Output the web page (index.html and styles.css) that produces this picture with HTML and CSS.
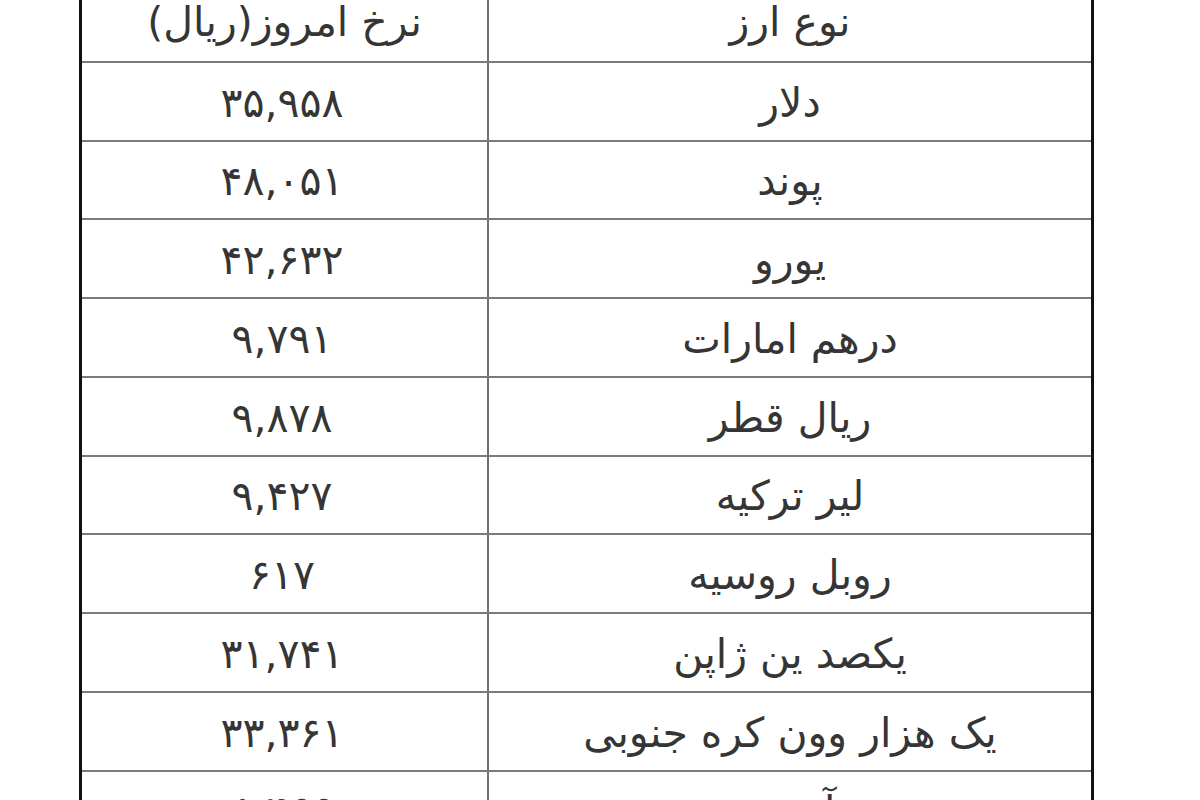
FILE: index.html
```html
<!DOCTYPE html>
<html lang="fa">
<head>
<meta charset="utf-8">
<link rel="stylesheet" href="styles.css">
</head>
<body>
<table class="rates" dir="rtl">
  <thead>
    <tr><th class="name">نوع ارز</th><th class="rate">نرخ امروز(ریال)</th></tr>
  </thead>
  <tbody>
    <tr><td class="name">دلار</td><td class="rate num">۳۵,۹۵۸</td></tr>
    <tr><td class="name">پوند</td><td class="rate num">۴۸,۰۵۱</td></tr>
    <tr><td class="name">یورو</td><td class="rate num">۴۲,۶۳۲</td></tr>
    <tr><td class="name">درهم امارات</td><td class="rate num">۹,۷۹۱</td></tr>
    <tr><td class="name">ریال قطر</td><td class="rate num">۹,۸۷۸</td></tr>
    <tr><td class="name">لیر ترکیه</td><td class="rate num">۹,۴۲۷</td></tr>
    <tr><td class="name">روبل روسیه</td><td class="rate num">۶۱۷</td></tr>
    <tr><td class="name">یکصد ین ژاپن</td><td class="rate num">۳۱,۷۴۱</td></tr>
    <tr><td class="name">یک هزار وون کره جنوبی</td><td class="rate num">۳۳,۳۶۱</td></tr>
    <tr><td class="name">یوآن چین</td><td class="rate num">۵,۴۶۶</td></tr>
  </tbody>
</table>
</body>
</html>
```

FILE: styles.css
```css
html, body {
  margin: 0;
  padding: 0;
  background: #ffffff;
  overflow: hidden;
}

.rates {
  margin: -18px 0 0 79px;
  width: 1012px;
  border-collapse: collapse;
  table-layout: fixed;
  font-family: "DejaVu Sans", sans-serif;
  font-size: 41px;
  color: #353535;
  border-left: 3px solid #111111;
  border-right: 3px solid #111111;
}

.rates th,
.rates td {
  height: 76.75px;
  padding: 0;
  text-align: center;
  vertical-align: middle;
  font-weight: normal;
  border-top: 2px solid #7a7a7a;
  border-bottom: 2px solid #7a7a7a;
  line-height: 1;
}

.rates td {
  height: 72.75px;
  padding-top: 4px;
}

.rates .name {
  width: 602px;
  border-left: 2px solid #6e6e6e;
}

.rates .rate {
  width: 405px;
}

.rates .num {
  letter-spacing: 5px;
  text-indent: 5px;
}
```
